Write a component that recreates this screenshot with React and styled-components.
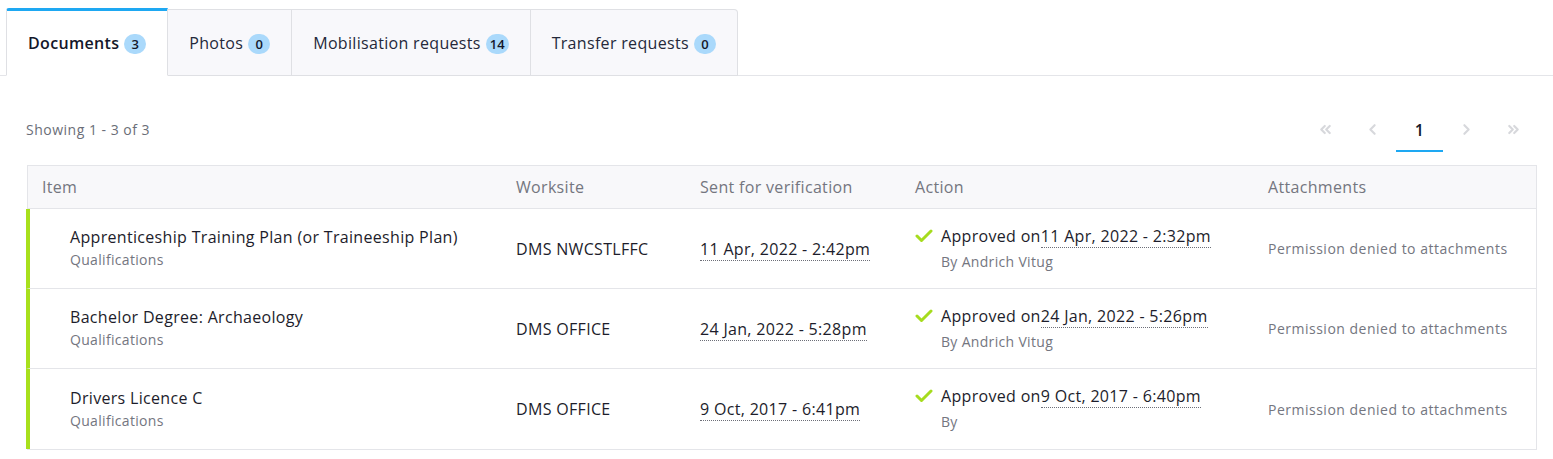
import React from "react";
import styled, { createGlobalStyle } from "styled-components";
import { ChevronsLeft, ChevronLeft, ChevronRight, ChevronsRight } from "lucide-react";

const Global = createGlobalStyle`
  html, body { margin: 0; padding: 0; background: #fff; }
  body { font-family: "Open Sans", "Noto Sans", sans-serif; color: #1d1d2b; letter-spacing: 0.32px; }
  * { box-sizing: border-box; }
`;

const Page = styled.div`
  padding-top: 8px;
`;

const TabBar = styled.div`
  display: flex;
  padding-left: 6px;
  border-bottom: 1px solid #e4e5e9;
`;

const Tab = styled.div`
  display: flex;
  align-items: center;
  gap: 5px;
  padding: 0 21px;
  margin-bottom: -1px;
  font-size: 16px;
  font-weight: ${(p) => (p.$active ? 600 : 400)};
  color: ${(p) => (p.$active ? "#14172a" : "#24283a")};
  background: ${(p) => (p.$active ? "#fff" : "#f8f8fb")};
  border: 1px solid #dfe0e4;
  border-left: ${(p) => (p.$first ? "1px solid #dfe0e4" : "none")};
  border-top: ${(p) => (p.$active ? "3px solid #1ea8f2" : "1px solid #dfe0e4")};
  border-bottom: ${(p) => (p.$active ? "1px solid #fff" : "1px solid #dfe0e4")};
  border-top-right-radius: ${(p) => (p.$last ? "4px" : "0")};
  border-top-left-radius: ${(p) => (p.$first ? "3px" : "0")};
  margin-top: ${(p) => (p.$active ? "0" : "1px")};
  height: ${(p) => (p.$active ? "68px" : "67px")};
`;

const Badge = styled.span`
  display: inline-flex;
  align-items: center;
  justify-content: center;
  min-width: 22px;
  height: 20px;
  padding: 0 4px;
  border-radius: 10px;
  background: #aad9fb;
  color: #14172a;
  font-size: 13px;
  font-weight: 600;
  letter-spacing: 0;
  margin-top: 2px;
`;

const Content = styled.div`
  padding: 0 16px 0 26px;
`;

const Toolbar = styled.div`
  display: flex;
  align-items: center;
  justify-content: space-between;
  height: 89px;
  padding-top: 18px;
`;

const Showing = styled.div`
  font-size: 14px;
  color: #6b6e78;
  letter-spacing: 0.5px;
`;

const Pager = styled.div`
  display: flex;
  align-items: center;
`;

const PageBtn = styled.div`
  width: 47px;
  height: 44px;
  display: flex;
  align-items: center;
  justify-content: center;
  color: ${(p) => (p.$active ? "#14172a" : "#d7d8dc")};
  font-weight: 600;
  font-size: 16px;
  border-bottom: 2px solid ${(p) => (p.$active ? "#1ea8f2" : "transparent")};
  padding-top: 2px;
`;

const Table = styled.div`
  border: 1px solid #e4e5e9;
  border-left: none;
  margin-left: 1px;
`;

const cols = "474px 184px 215px 353px 1fr";

const HeadRow = styled.div`
  display: grid;
  grid-template-columns: ${cols};
  height: 43px;
  align-items: center;
  background: #f8f8fa;
  border-left: 1px solid #e4e5e9;
  border-bottom: 1px solid #e4e5e9;
`;

const HeadCell = styled.div`
  padding-left: 14px;
  font-size: 16px;
  color: #74767f;
`;

const Row = styled.div`
  display: grid;
  grid-template-columns: ${cols};
  height: 80px;
  align-items: center;
  border-left: 4px solid #a8e01c;
  margin-left: -1px;
  border-bottom: ${(p) => (p.$last ? "none" : "1px solid #e4e5e9")};
`;

const Cell = styled.div`
  padding-left: ${(p) => p.$pl || 12}px;
  display: flex;
  flex-direction: column;
`;

const Title = styled.div`
  font-size: 16px;
  color: #1d1d2b;
  line-height: 22px;
`;

const Sub = styled.div`
  font-size: 14px;
  color: #74767f;
  line-height: 22px;
  margin-top: 1px;
`;

const Plain = styled.div`
  font-size: 16px;
  color: #1d1d2b;
`;

const DateText = styled.span`
  border-bottom: 1px dotted #6d6f78;
  font-size: 16px;
  color: #1d1d2b;
`;

const ActionLine = styled.div`
  display: flex;
  align-items: center;
  gap: 8px;
  font-size: 16px;
  line-height: 22px;
  color: #1d1d2b;
`;

const ActionSub = styled.div`
  font-size: 14px;
  color: #74767f;
  padding-left: 26px;
  line-height: 22px;
  margin-top: 4px;
`;

const Muted = styled.div`
  font-size: 14px;
  color: #74767f;
  letter-spacing: 0.5px;
`;

const Check = () => (
  <svg width="18" height="14" viewBox="0 0 18 14">
    <polyline points="2,7 6.5,11.5 16,2" fill="none" stroke="#a6dc1e" strokeWidth="3" strokeLinecap="round" strokeLinejoin="round" />
  </svg>
);

const rows = [
  { title: "Apprenticeship Training Plan (or Traineeship Plan)", site: "DMS NWCSTLFFC", sent: "11 Apr, 2022 - 2:42pm", approved: "11 Apr, 2022 - 2:32pm", by: "By Andrich Vitug" },
  { title: "Bachelor Degree: Archaeology", site: "DMS OFFICE", sent: "24 Jan, 2022 - 5:28pm", approved: "24 Jan, 2022 - 5:26pm", by: "By Andrich Vitug" },
  { title: "Drivers Licence C", site: "DMS OFFICE", sent: "9 Oct, 2017 - 6:41pm", approved: "9 Oct, 2017 - 6:40pm", by: "By" },
];

export default function App() {
  return (
    <Page>
      <Global />
      <TabBar>
        <Tab $active $first>Documents <Badge>3</Badge></Tab>
        <Tab>Photos <Badge>0</Badge></Tab>
        <Tab>Mobilisation requests <Badge>14</Badge></Tab>
        <Tab $last>Transfer requests <Badge>0</Badge></Tab>
      </TabBar>
      <Content>
        <Toolbar>
          <Showing>Showing 1 - 3 of 3</Showing>
          <Pager>
            <PageBtn><ChevronsLeft size={17} strokeWidth={3} /></PageBtn>
            <PageBtn><ChevronLeft size={17} strokeWidth={3} /></PageBtn>
            <PageBtn $active>1</PageBtn>
            <PageBtn><ChevronRight size={17} strokeWidth={3} /></PageBtn>
            <PageBtn><ChevronsRight size={17} strokeWidth={3} /></PageBtn>
          </Pager>
        </Toolbar>
        <Table>
          <HeadRow>
            <HeadCell>Item</HeadCell>
            <HeadCell>Worksite</HeadCell>
            <HeadCell>Sent for verification</HeadCell>
            <HeadCell>Action</HeadCell>
            <HeadCell>Attachments</HeadCell>
          </HeadRow>
          {rows.map((r, i) => (
            <Row key={i} $last={i === rows.length - 1}>
              <Cell $pl={40}>
                <Title>{r.title}</Title>
                <Sub>Qualifications</Sub>
              </Cell>
              <Cell $pl={12}><Plain>{r.site}</Plain></Cell>
              <Cell $pl={12}><div><DateText>{r.sent}</DateText></div></Cell>
              <Cell $pl={12}>
                <ActionLine>
                  <Check />
                  <span>Approved on<DateText>{r.approved}</DateText></span>
                </ActionLine>
                <ActionSub>{r.by}</ActionSub>
              </Cell>
              <Cell $pl={12}><Muted>Permission denied to attachments</Muted></Cell>
            </Row>
          ))}
        </Table>
      </Content>
    </Page>
  );
}
